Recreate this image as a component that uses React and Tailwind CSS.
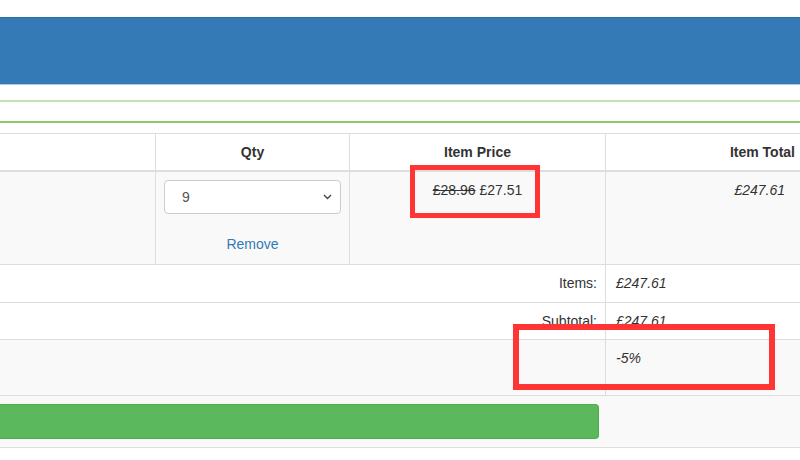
import React from 'react';

const cell = 'border-l border-[#dddddd] px-2';

export default function App() {
  return (
    <div className="relative w-[800px] h-[460px] overflow-hidden bg-white text-[14px] leading-[20px] text-[#333333] font-['Liberation_Sans',Arial,sans-serif]">
      <div className="h-[17px]" />
      {/* header band */}
      <div className="h-[68px] bg-[#337ab7] border-t border-[#2e6da4] border-b border-b-[#a9c9e6]" />
      <div className="h-[15px]" />
      {/* alert box */}
      <div className="h-[23px] border-t-2 border-[#c3e1b2] border-b-2 border-b-[#8fc771]" />
      <div className="h-[10px]" />

      {/* cart table */}
      <div className="border-t border-[#dddddd]">
        {/* head */}
        <div className="flex h-[38px] border-b-2 border-[#dddddd] font-bold">
          <div className="w-[155px]" />
          <div className={`${cell} w-[194px] py-2 text-center`}>Qty</div>
          <div className={`${cell} w-[256px] py-2 text-center`}>Item Price</div>
          <div className={`${cell} flex-1 py-2 pr-[5px] text-right`}>Item Total</div>
        </div>

        {/* item row */}
        <div className="flex h-[93px] bg-[#f9f9f9] border-b border-[#dddddd]">
          <div className="w-[155px]" />
          <div className={`${cell} w-[194px] pt-2`}>
            <div className="flex h-[34px] items-center justify-between rounded-[4px] border border-[#cccccc] bg-white pl-[17px] pr-[8px] text-[#555555]">
              <span>9</span>
              <svg width="9" height="6" viewBox="0 0 9 6" fill="none">
                <path d="M1 1l3.5 3.5L8 1" stroke="#444" strokeWidth="1.4" />
              </svg>
            </div>
            <div className="mt-[20px] text-center text-[#337ab7]">Remove</div>
          </div>
          <div className={`${cell} w-[256px] py-2 text-center`}>
            <span className="line-through">£28.96</span> £27.51
          </div>
          <div className={`${cell} flex-1 py-2 pr-[15px] text-right italic`}>£247.61</div>
        </div>

        {/* totals */}
        <div className="flex h-[38px] border-b border-[#dddddd] bg-white">
          <div className="w-[605px] py-2 pr-2 text-right">Items:</div>
          <div className={`${cell} flex-1 py-2 pl-[10px] italic`}>£247.61</div>
        </div>
        <div className="flex h-[37px] border-b border-[#dddddd] bg-white">
          <div className="w-[605px] py-2 pr-2 text-right">Subtotal:</div>
          <div className={`${cell} flex-1 py-2 pl-[10px] italic`}>£247.61</div>
        </div>
        <div className="flex h-[56px] border-b border-[#dddddd] bg-[#f9f9f9]">
          <div className="w-[605px]" />
          <div className={`${cell} flex-1 py-2 pl-[10px] italic`}>-5%</div>
        </div>
        <div className="h-[52px] border-b border-[#dddddd] bg-[#f9f9f9] pt-2">
          <div className="h-[35px] w-[599px] rounded-r-[4px] border border-l-0 border-[#4cae4c] bg-[#5cb85c]" />
        </div>
      </div>

      {/* annotation boxes */}
      <div className="absolute left-[410px] top-[165px] h-[53px] w-[130px] border-[5px] border-[#ff3535]" />
      <div className="absolute left-[513px] top-[324px] h-[66px] w-[262px] border-[6px] border-[#ff3535]" />
    </div>
  );
}
